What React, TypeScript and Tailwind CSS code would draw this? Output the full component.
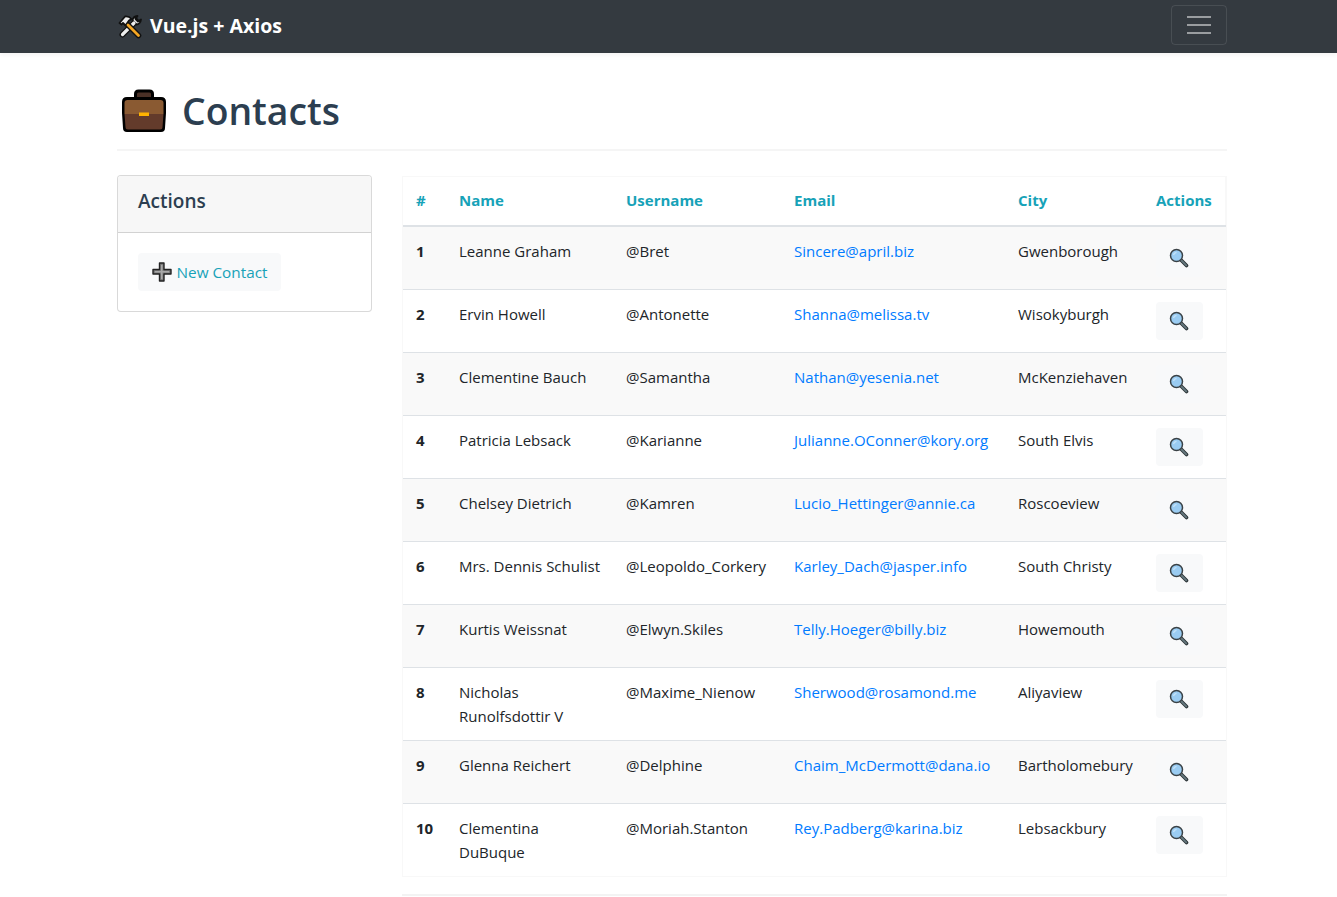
import React from 'react';

interface Contact {
  id: number;
  name: string;
  username: string;
  email: string;
  city: string;
}

const contacts: Contact[] = [
  { id: 1, name: 'Leanne Graham', username: 'Bret', email: 'Sincere@april.biz', city: 'Gwenborough' },
  { id: 2, name: 'Ervin Howell', username: 'Antonette', email: 'Shanna@melissa.tv', city: 'Wisokyburgh' },
  { id: 3, name: 'Clementine Bauch', username: 'Samantha', email: 'Nathan@yesenia.net', city: 'McKenziehaven' },
  { id: 4, name: 'Patricia Lebsack', username: 'Karianne', email: 'Julianne.OConner@kory.org', city: 'South Elvis' },
  { id: 5, name: 'Chelsey Dietrich', username: 'Kamren', email: 'Lucio_Hettinger@annie.ca', city: 'Roscoeview' },
  { id: 6, name: 'Mrs. Dennis Schulist', username: 'Leopoldo_Corkery', email: 'Karley_Dach@jasper.info', city: 'South Christy' },
  { id: 7, name: 'Kurtis Weissnat', username: 'Elwyn.Skiles', email: 'Telly.Hoeger@billy.biz', city: 'Howemouth' },
  { id: 8, name: 'Nicholas Runolfsdottir V', username: 'Maxime_Nienow', email: 'Sherwood@rosamond.me', city: 'Aliyaview' },
  { id: 9, name: 'Glenna Reichert', username: 'Delphine', email: 'Chaim_McDermott@dana.io', city: 'Bartholomebury' },
  { id: 10, name: 'Clementina DuBuque', username: 'Moriah.Stanton', email: 'Rey.Padberg@karina.biz', city: 'Lebsackbury' },
];

const ToolsIcon = () => (
  <svg width="24" height="24" viewBox="0 0 24 24" className="shrink-0">
    {/* wrench, lower left to upper right */}
    <path d="M4.5 19.5 L18 6" stroke="#111" strokeWidth="6" strokeLinecap="round" />
    <path d="M14.5 5.5 Q15 1.5 19.5 1 L17.5 4 L20 6.5 L23 4.5 Q22.5 9 18.5 9.5 Z" fill="#eee" stroke="#111" strokeWidth="1.8" strokeLinejoin="round" />
    <path d="M4.5 19.5 L16 8" stroke="#eee" strokeWidth="3.2" strokeLinecap="round" />
    {/* hammer, head upper left, handle to lower right */}
    <path d="M20.5 20.5 L9 9" stroke="#111" strokeWidth="5.5" strokeLinecap="round" />
    <path d="M1.5 8 L7 1.5 Q11 1 13.5 4 L11 5.5 L7.5 10.5 L5 8 L3.5 9.5 Z" fill="#eee" stroke="#111" strokeWidth="1.8" strokeLinejoin="round" />
    <path d="M20.5 20.5 L10 10" stroke="#f5a623" strokeWidth="2.8" strokeLinecap="round" />
  </svg>
);

const BriefcaseIcon = () => (
  <svg width="48" height="44" viewBox="0 0 48 44" className="shrink-0">
    <path d="M15.5 9 V5 Q15.5 2 18.5 2 H29.5 Q32.5 2 32.5 5 V9" fill="#4a3026" stroke="#000" strokeWidth="3" />
    <path d="M2 13 Q2 8 7 8 H41 Q46 8 46 13 V24 L45 39 Q45 43 41 43 H7 Q3 43 3 39 L2 24 Z" fill="#000" />
    <path d="M4.5 14 Q4.5 11 7.5 11 H40.5 Q43.5 11 43.5 14 V25 H4.5 Z" fill="#8a5a32" />
    <path d="M4.5 25 H43.5 L42.5 38 Q42.5 40.5 40 40.5 H8 Q5.5 40.5 5.5 38 Z" fill="#633b2b" />
    <rect x="19" y="23.5" width="10" height="3.5" fill="#ffb300" />
  </svg>
);

const PlusIcon = () => (
  <svg width="20" height="20" viewBox="0 0 20 20" className="shrink-0">
    <path d="M7.5 1 H12 V7.5 H19 V12 H12 V19 H7.5 V12 H1 V7.5 H7.5 Z" fill="#7d7d7d" stroke="#222" strokeWidth="1.4" strokeLinejoin="round" />
    <path d="M9 3 H10.5 V9 H17 V10.5 H10.5 V17 H9 V10.5 H3 V9 H9 Z" fill="#a8a8a8" />
  </svg>
);

const SearchIcon = () => (
  <svg width="20" height="20" viewBox="0 0 20 20" className="shrink-0">
    <path d="M11.5 11.5 L17.5 17.5" stroke="#2a3235" strokeWidth="3.6" strokeLinecap="round" />
    <path d="M12 12 L17.3 17.3" stroke="#66797f" strokeWidth="1.8" strokeLinecap="round" />
    <circle cx="7.5" cy="7.5" r="6" fill="#9accf2" stroke="#3a4246" strokeWidth="1.5" />
    <path d="M4.5 7 Q5 4.8 7.5 4.3" fill="none" stroke="#c6e4f9" strokeWidth="1.3" />
  </svg>
);

const App = () => {
  return (
    <div className="h-[897px] overflow-hidden bg-white text-[#212529] font-['Open_Sans',sans-serif] text-[15px] leading-6">
      <nav className="h-[53px] bg-[#343a40] shadow-[0_2px_4px_rgba(0,0,0,0.05)]">
        <div className="ml-[117px] w-[1110px] h-full flex items-center justify-between">
          <a className="flex items-center gap-[8px] pl-[1px] text-white text-[19.5px] font-bold whitespace-nowrap">
            <ToolsIcon />
            <span className="-mt-[2px]">Vue.js + Axios</span>
          </a>
          <button className="w-[56px] h-[40px] -mt-[3px] flex flex-col items-center justify-center gap-[6px] rounded border border-white/10">
            <span className="block w-6 h-[2px] bg-white/50" />
            <span className="block w-6 h-[2px] bg-white/50" />
            <span className="block w-6 h-[2px] bg-white/50" />
          </button>
        </div>
      </nav>

      <main className="ml-[117px] w-[1110px]">
        <header className="h-[98px] flex items-start gap-[14px] pt-[36px] pl-[3px] border-b-2 border-[#f5f5f5]">
          <BriefcaseIcon />
          <h1 className="text-[37.3px] leading-[46px] font-semibold text-[#2c3e50] -mt-[1px]">Contacts</h1>
        </header>

        <div className="flex gap-[30px] mt-[24px]">
          <aside className="w-[255px] shrink-0 self-start rounded border border-black/15 bg-white overflow-hidden">
            <div className="h-[57px] flex items-center px-5 pb-[6px] bg-[#f7f7f7] border-b border-black/15 text-[19px] font-semibold text-[#2c3e50]">
              Actions
            </div>
            <div className="p-5">
              <button className="h-[38px] w-[143px] flex items-center justify-center gap-[5px] rounded bg-[#f8f9fa] text-[#17a2b8] text-[15.3px] whitespace-nowrap">
                <PlusIcon />
                New Contact
              </button>
            </div>
          </aside>

          <section className="w-[825px] shrink-0 mt-[1px]">
            <div className="border border-[#f8f8f8] border-r-2">
              <table className="w-full table-fixed border-collapse">
                <colgroup>
                  <col className="w-[44px]" />
                  <col className="w-[167px]" />
                  <col className="w-[168px]" />
                  <col className="w-[224px]" />
                  <col className="w-[138px]" />
                  <col className="w-[82px]" />
                </colgroup>
                <thead>
                  <tr className="border-b-2 border-[#dee2e6] text-left text-[#17a2b8] font-bold">
                    <th className="pl-[13px] pr-3 pt-[11px] pb-[13px] font-bold">#</th>
                    <th className="px-3 pt-[11px] pb-[13px] font-bold">Name</th>
                    <th className="px-3 pt-[11px] pb-[13px] font-bold">Username</th>
                    <th className="px-3 pt-[11px] pb-[13px] font-bold">Email</th>
                    <th className="px-3 pt-[11px] pb-[13px] font-bold">City</th>
                    <th className="px-3 pt-[11px] pb-[13px] font-bold">Actions</th>
                  </tr>
                </thead>
                <tbody>
                  {contacts.map((c) => (
                    <tr key={c.id} className={`border-b border-[#dee2e6] last:border-b-0 ${c.id % 2 === 1 ? 'bg-[#f9f9f9]' : 'bg-white'}`}>
                      <td className="pl-[13px] pr-3 py-3 align-top font-bold">{c.id}</td>
                      <td className="px-3 py-3 align-top">{c.name}</td>
                      <td className="px-3 py-3 align-top whitespace-nowrap">@{c.username}</td>
                      <td className="px-3 py-3 align-top whitespace-nowrap"><a className="text-[#007bff]">{c.email}</a></td>
                      <td className="px-3 py-3 align-top whitespace-nowrap">{c.city}</td>
                      <td className="px-3 py-3 align-top">
                        <button className="w-[47px] h-[38px] flex items-center justify-center pr-[2px] rounded bg-[#f8f9fa]">
                          <SearchIcon />
                        </button>
                      </td>
                    </tr>
                  ))}
                </tbody>
              </table>
            </div>
            <hr className="mt-[17px] border-t-2 border-[#f3f3f3]" />
          </section>
        </div>
      </main>
    </div>
  );
};

export default App;
